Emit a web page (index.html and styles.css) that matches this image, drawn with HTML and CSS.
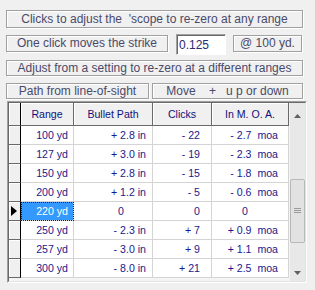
FILE: index.html
```html
<!DOCTYPE html>
<html lang="en">
<head>
  <meta charset="UTF-8" />
  <title>Scope Re-zero</title>
  <link rel="stylesheet" href="styles.css">
</head>
<body>
  <div class="form">

    <div class="label wide top">Clicks to adjust the  'scope to re-zero at any range</div>

    <div class="row strike-row">
      <div class="label strike">One click moves the strike</div>
      <input class="click-value" type="text" value="0.125" />
      <div class="label at-range">@ 100 yd.</div>
    </div>

    <div class="label wide adjust">Adjust from a setting to re-zero at a different ranges</div>

    <div class="row path-row">
      <div class="label path-label">Path from line-of-sight</div>
      <div class="label move-label">Move    +   u p or down</div>
    </div>

    <div class="grid">
      <div class="grid-inner">
        <table>
          <thead>
            <tr>
              <th class="rowhead"></th>
              <th class="rng">Range</th>
              <th class="path">Bullet Path</th>
              <th class="clk">Clicks</th>
              <th class="moa">In M. O. A.</th>
            </tr>
          </thead>
          <tbody>
            <tr><td class="rowhead"></td><td class="rng">100 yd</td><td class="path">+ 2.8 in</td><td class="clk">- 22</td><td class="moa">- 2.7  moa</td></tr>
            <tr><td class="rowhead"></td><td class="rng">127 yd</td><td class="path">+ 3.0 in</td><td class="clk">- 19</td><td class="moa">- 2.3  moa</td></tr>
            <tr><td class="rowhead"></td><td class="rng">150 yd</td><td class="path">+ 2.8 in</td><td class="clk">- 15</td><td class="moa">- 1.8  moa</td></tr>
            <tr><td class="rowhead"></td><td class="rng">200 yd</td><td class="path">+ 1.2 in</td><td class="clk">- 5</td><td class="moa">- 0.6  moa</td></tr>
            <tr>
              <td class="rowhead current"><svg width="6" height="10" viewBox="0 0 6 10"><path d="M0 0 L6 5 L0 10 Z" fill="#000"/></svg></td>
              <td class="rng selected">220 yd</td><td class="path zero">0</td><td class="clk">0</td><td class="moa zero">0</td>
            </tr>
            <tr><td class="rowhead"></td><td class="rng">250 yd</td><td class="path">- 2.3 in</td><td class="clk">+ 7</td><td class="moa">+ 0.9  moa</td></tr>
            <tr><td class="rowhead"></td><td class="rng">257 yd</td><td class="path">- 3.0 in</td><td class="clk">+ 9</td><td class="moa">+ 1.1  moa</td></tr>
            <tr><td class="rowhead"></td><td class="rng">300 yd</td><td class="path">- 8.0 in</td><td class="clk">+ 21</td><td class="moa">+ 2.5  moa</td></tr>
          </tbody>
        </table>

        <div class="scrollbar">
          <div class="arrow up">
            <svg width="7" height="4" viewBox="0 0 7 4"><path d="M0 4 L3.5 0 L7 4 Z" fill="#606060"/></svg>
          </div>
          <div class="track">
            <div class="thumb">
              <svg width="7" height="6" viewBox="0 0 7 6"><path d="M0 0.5 H7 M0 2.5 H7 M0 4.5 H7" stroke="#9a9a9a" stroke-width="1"/></svg>
            </div>
          </div>
          <div class="arrow down">
            <svg width="7" height="4" viewBox="0 0 7 4"><path d="M0 0 L3.5 4 L7 0 Z" fill="#606060"/></svg>
          </div>
        </div>
      </div>
    </div>

  </div>
</body>
</html>
```

FILE: styles.css
```css
body {
  margin: 0;
  background-color: #f0f0f0;
  font-family: "Liberation Sans", Arial, sans-serif;
}
.form {
  padding: 10px 0 0 6px;
}
.label {
  box-sizing: border-box;
  border: 1px solid #a0a0a0;
  box-shadow: inset 1px 1px #fff, 1px 1px #fff;
  color: #4a4a6a;
  font-size: 12px;
  text-align: center;
  white-space: pre;
}
.wide {
  width: 297px;
}
.top {
  height: 18px;
  line-height: 16px;
}
.row {
  display: flex;
  align-items: flex-start;
}
.strike-row {
  margin-top: 6px;
  height: 21px;
}
.strike {
  width: 162px;
  height: 17px;
  line-height: 15px;
  margin-top: 1px;
}
.click-value {
  box-sizing: border-box;
  width: 50px;
  height: 21px;
  margin: 0 0 0 8px;
  padding: 0 0 0 2px;
  border: 1px solid;
  border-color: #a0a0a0 #fff #fff #a0a0a0;
  box-shadow: inset 1px 1px #696969;
  background-color: #fff;
  color: #2a2a70;
  font-family: "Liberation Sans", Arial, sans-serif;
  font-size: 12px;
  outline: none;
}
.at-range {
  width: 69px;
  height: 17px;
  line-height: 15px;
  margin: 1px 0 0 7px;
}
.adjust {
  margin-top: 5px;
  height: 16px;
  line-height: 14px;
}
.path-row {
  margin-top: 7px;
  gap: 3px;
}
.path-label, .move-label {
  height: 16px;
  line-height: 14px;
}
.path-label {
  width: 143px;
}
.move-label {
  width: 151px;
}

/* data grid */
.grid {
  box-sizing: border-box;
  width: 300px;
  height: 182px;
  margin: 2px 0 0 1px;
  border: 1px solid;
  border-color: #a0a0a0 #fff #fff #a0a0a0;
}
.grid-inner {
  box-sizing: border-box;
  height: 100%;
  display: flex;
  border: 1px solid;
  border-color: #696969 #e3e3e3 #e3e3e3 #696969;
  background-color: #f4f4f4;
}
table {
  width: 280px;
  table-layout: fixed;
  border-collapse: separate;
  border-spacing: 0;
  font-size: 10.6px;
  color: #1a1a8c;
  align-self: flex-start;
}
th, td {
  padding: 0;
  white-space: pre;
  box-sizing: border-box;
}
th {
  height: 23px;
  font-weight: normal;
  text-align: center;
  color: #10107a;
  background-color: #f0f0f0;
  border-right: 1px solid #696969;
  border-bottom: 1px solid #696969;
  box-shadow: inset 1px 1px #fff;
}
td {
  height: 19px;
  background-color: #fff;
  border-right: 1px solid #d4d4d4;
  border-bottom: 1px solid #d4d4d4;
  text-align: right;
}
th.rowhead {
  width: 12px;
  border-right-color: #000;
}
td.rowhead {
  background-color: #f0f0f0;
  border-right: 1px solid #000;
  border-bottom: 1px solid #696969;
  box-shadow: inset 1px 1px #fff;
  text-align: left;
  white-space: normal;
  line-height: 0;
}
.current svg {
  display: block;
  margin-left: 2px;
}
.rng {
  width: 53px;
  padding-right: 5px;
}
.path {
  width: 79px;
  padding-right: 6px;
}
.clk {
  width: 59px;
  padding-right: 11px;
}
.moa {
  width: 77px;
  padding-right: 10px;
}
th.rng, th.path, th.clk, th.moa {
  padding: 0;
}
td.path.zero {
  padding-right: 28px;
}
td.moa.zero {
  padding-right: 40px;
}
td.selected {
  background-color: #3399ff;
  color: #fff;
  outline: 1px dotted #202020;
  outline-offset: -1px;
}

/* scrollbar */
.scrollbar {
  width: 16px;
  display: flex;
  flex-direction: column;
  background-color: #e8e8e8;
  border-left: 1px solid #f4f4f4;
}
.arrow {
  display: flex;
  align-items: center;
  justify-content: center;
}
.arrow.up {
  height: 26px;
}
.arrow.down {
  height: 16px;
}
.track {
  flex: 1;
  padding-top: 50px;
}
.thumb {
  box-sizing: border-box;
  width: 15px;
  height: 64px;
  border: 1px solid #b8b8b8;
  border-radius: 2px;
  background-color: #e2e2e2;
  display: flex;
  align-items: center;
  justify-content: center;
}
```
